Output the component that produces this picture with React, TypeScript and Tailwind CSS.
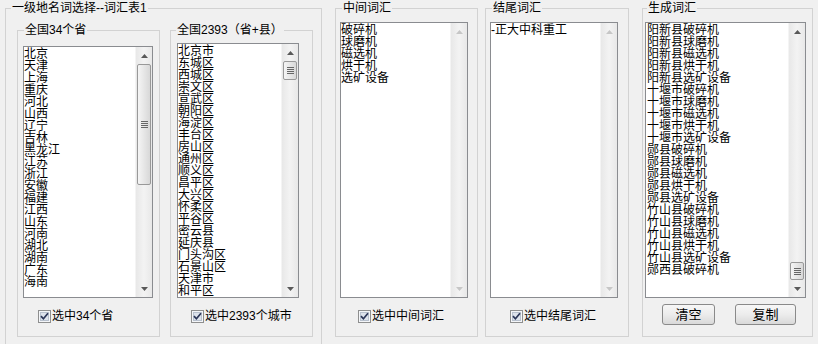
import React from 'react';

const provinces = [
  '北京', '天津', '上海', '重庆', '河北', '山西', '辽宁', '吉林', '黑龙江', '江苏',
  '浙江', '安徽', '福建', '江西', '山东', '河南', '湖北', '湖南', '广东', '海南',
];

const cities = [
  '北京市', '东城区', '西城区', '崇文区', '宣武区', '朝阳区', '海淀区', '丰台区', '房山区', '通州区',
  '顺义区', '昌平区', '大兴区', '怀柔区', '平谷区', '密云县', '延庆县', '门头沟区', '石景山区', '天津市', '和平区',
];

const middle = ['破碎机', '球磨机', '磁选机', '烘干机', '选矿设备'];
const tail = ['-正大中科重工'];
const places = ['阳新县', '十堰市', '郧县', '竹山县'];
const generated = [...places.flatMap((p) => middle.map((m) => p + m)), '郧西县破碎机'];

const Arrow = ({ up, disabled }: { up?: boolean; disabled?: boolean }) => (
  <div className="h-[17px] flex items-center justify-center shrink-0">
    <svg width="7" height="4" viewBox="0 0 7 4">
      <path d={up ? 'M0 4 L3.5 0 L7 4Z' : 'M0 0 L3.5 4 L7 0Z'} fill={disabled ? '#c6c6c6' : '#595959'} />
    </svg>
  </div>
);

const Thumb = ({ className }: { className: string }) => (
  <div
    className={`mx-[1px] shrink-0 rounded-[2px] border border-[#999] bg-gradient-to-r from-[#f5f5f5] to-[#d8d8d8] flex flex-col items-center justify-center gap-[1px] ${className}`}
  >
    <div className="h-[1px] w-[7px] bg-[#666]" />
    <div className="h-[1px] w-[7px] bg-[#666]" />
    <div className="h-[1px] w-[7px] bg-[#666]" />
    <div className="h-[1px] w-[7px] bg-[#666]" />
  </div>
);

type BarProps = { thumb?: string; atEnd?: boolean };

const ScrollBar = ({ thumb, atEnd }: BarProps) => (
  <div className="w-[17px] shrink-0 flex flex-col bg-gradient-to-r from-[#e8e8e8] via-[#f3f3f3] to-[#e8e8e8] border-l border-[#f4f4f4]">
    <Arrow up disabled={!thumb} />
    <div className="flex-1 flex flex-col">
      {thumb && atEnd && <div className="flex-1" />}
      {thumb && <Thumb className={thumb} />}
    </div>
    <Arrow disabled={!thumb} />
  </div>
);

const ListBox = ({ items, className, bar }: { items: string[]; className: string; bar: BarProps }) => (
  <div className={`flex border border-[#8a8c90] bg-white ${className}`}>
    <div className="flex-1 overflow-hidden pt-[1px] text-black">
      {items.map((item) => (
        <div key={item} className="h-[12px] leading-[12px] whitespace-nowrap">
          {item}
        </div>
      ))}
    </div>
    <ScrollBar {...bar} />
  </div>
);

const CheckBox = ({ label, className }: { label: string; className: string }) => (
  <div className={`flex items-center gap-[1px] h-[14px] ${className}`}>
    <svg width="13" height="13" viewBox="0 0 13 13">
      <rect x="0.5" y="0.5" width="12" height="12" fill="#f4f6f9" stroke="#8e8f8f" />
      <rect x="2.5" y="2.5" width="8" height="8" fill="#dde3ec" stroke="#b8c1ce" />
      <path d="M3 6.2 L5.4 8.8 L10 3.2" stroke="#2b3658" strokeWidth="1.7" fill="none" />
    </svg>
    <span>{label}</span>
  </div>
);

const WinButton = ({ label, className }: { label: string; className: string }) => (
  <button
    className={`h-[21px] rounded-[3px] border border-[#8a8a8a] bg-gradient-to-b from-[#f7f7f7] via-[#ececec] to-[#d9d9d9] text-[13px] leading-[19px] ${className}`}
  >
    {label}
  </button>
);

const App = () => {
  return (
    <div className="w-[818px] h-[344px] overflow-hidden bg-[#f0f0f0] flex items-start pl-[5px] pt-[1px] text-[12px] leading-[14px] text-black font-['Liberation_Sans','Noto_Sans_CJK_SC',sans-serif]">
      <fieldset className="w-[317px] h-[360px] shrink-0 border border-[#d2d2d2]">
        <legend className="ml-[5px] px-[1px]">一级地名词选择--词汇表1</legend>
        <div className="flex pl-[11px] gap-[10px] mt-[8px]">
          <fieldset className="w-[143px] h-[314px] shrink-0 border border-[#d2d2d2]">
            <legend className="ml-[6px] px-[1px]">全国34个省</legend>
            <ListBox items={provinces} className="mt-[9px] ml-[5px] w-[130px] h-[252px]" bar={{ thumb: 'h-[121px]' }} />
            <CheckBox label="选中34个省" className="mt-[11px] ml-[20px]" />
          </fieldset>
          <fieldset className="w-[143px] h-[314px] shrink-0 border border-[#d2d2d2]">
            <legend className="ml-[5px] px-[1px]">全国2393（省+县）</legend>
            <ListBox items={cities} className="mt-[6px] ml-[6px] w-[122px] h-[255px]" bar={{ thumb: 'h-[19px]' }} />
            <CheckBox label="选中2393个城市" className="mt-[11px] ml-[20px]" />
          </fieldset>
        </div>
      </fieldset>

      <fieldset className="ml-[13px] w-[143px] h-[336px] shrink-0 border border-[#d2d2d2]">
        <legend className="ml-[6px] px-[1px]">中间词汇</legend>
        <ListBox items={middle} className="mt-[7px] ml-[4px] w-[128px] h-[276px]" bar={{}} />
        <CheckBox label="选中中间词汇" className="mt-[11px] ml-[22px]" />
      </fieldset>

      <fieldset className="ml-[7px] w-[144px] h-[336px] shrink-0 border border-[#d2d2d2]">
        <legend className="ml-[6px] px-[1px]">结尾词汇</legend>
        <ListBox items={tail} className="mt-[7px] ml-[4px] w-[128px] h-[276px]" bar={{}} />
        <CheckBox label="选中结尾词汇" className="mt-[11px] ml-[24px]" />
      </fieldset>

      <fieldset className="ml-[13px] w-[171px] h-[336px] shrink-0 border border-[#d2d2d2]">
        <legend className="ml-[4px] px-[1px]">生成词汇</legend>
        <ListBox items={generated} className="mt-[7px] ml-[2px] w-[161px] h-[276px] pl-[1px]" bar={{ thumb: 'h-[18px]', atEnd: true }} />
        <div className="flex mt-[6px] ml-[19px]">
          <WinButton label="清空" className="w-[53px]" />
          <WinButton label="复制" className="ml-[20px] w-[61px]" />
        </div>
      </fieldset>
    </div>
  );
};

export default App;
